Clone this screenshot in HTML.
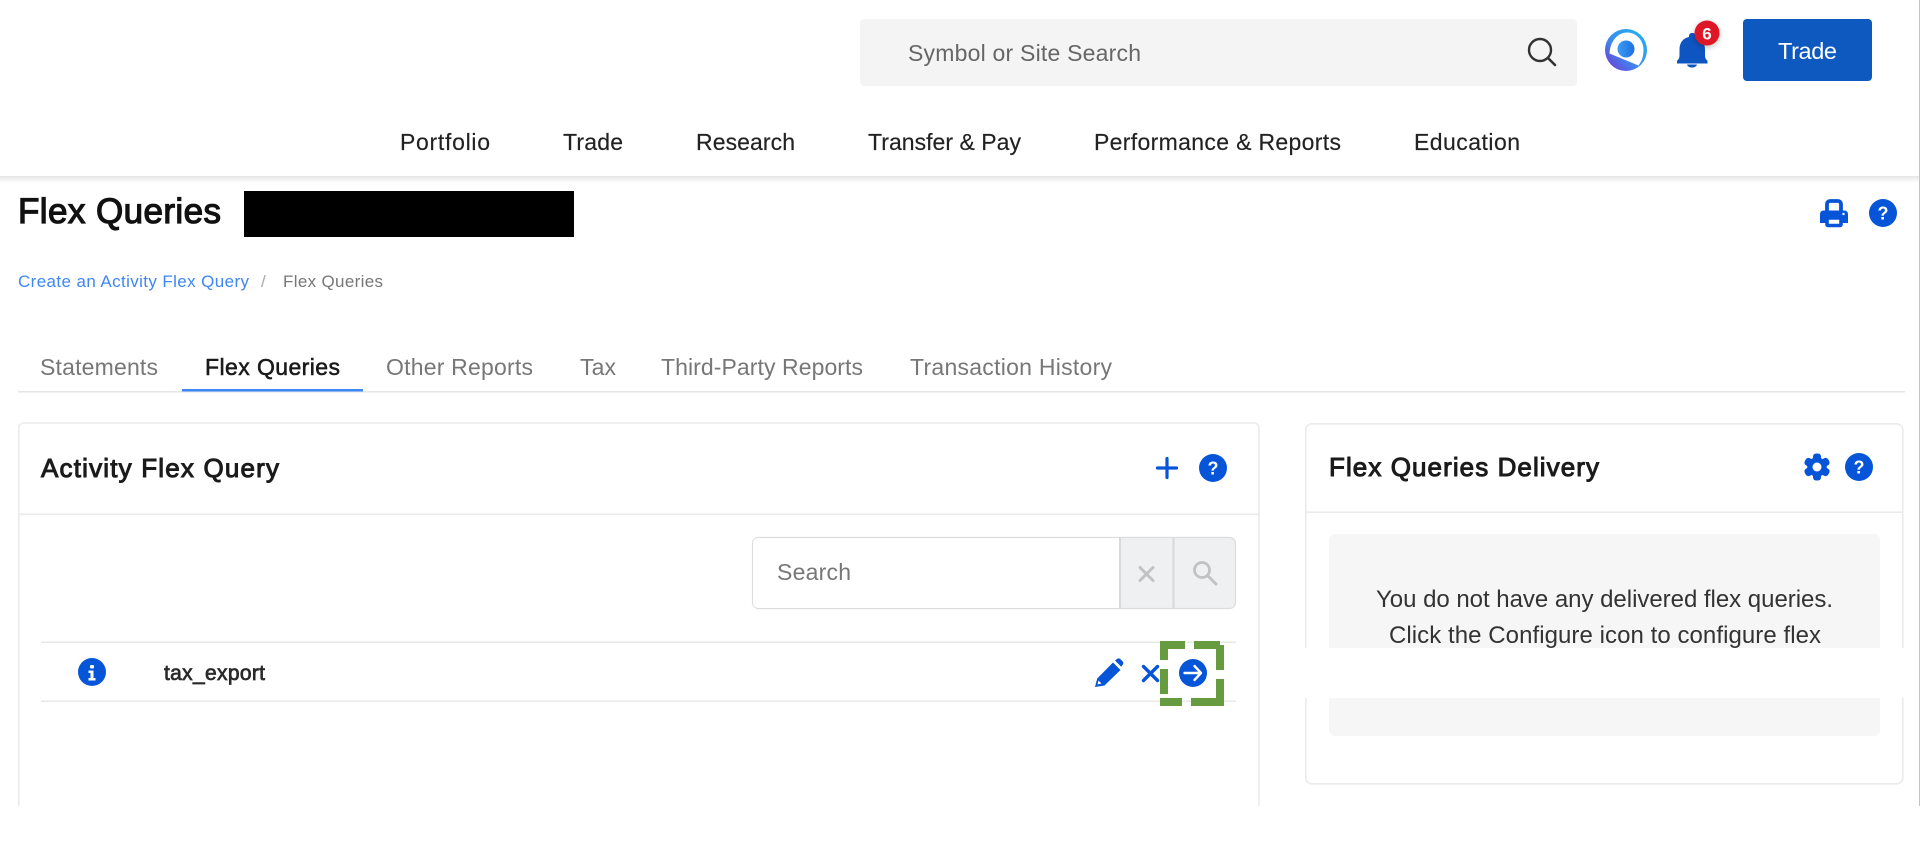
<!DOCTYPE html>
<html lang="en">
<head>
<meta charset="utf-8">
<title>Flex Queries</title>
<style>
html,body{margin:0;padding:0;background:#fff;width:1920px;height:859px;overflow:hidden}
svg{display:block;font-family:"Liberation Sans",sans-serif;filter:blur(.35px)}
.nav{font-size:23px;fill:#222;stroke:#222;stroke-width:.15px}
.tab{font-size:23px;fill:#777}
.ttl{font-size:26px;fill:#1b1b1b;stroke:#1b1b1b;stroke-width:1px}
.q{font-size:18px;font-weight:bold;fill:#fff;text-anchor:middle}
</style>
</head>
<body>
<svg width="1920" height="859" viewBox="0 0 1920 859" xmlns="http://www.w3.org/2000/svg">
<defs>
<linearGradient id="sh" x1="0" y1="0" x2="0" y2="1"><stop offset="0" stop-color="#000" stop-opacity=".1"/><stop offset="1" stop-color="#000" stop-opacity="0"/></linearGradient>
<linearGradient id="lg" x1="0" y1="1" x2="1" y2="0"><stop offset="0" stop-color="#7b2fd0"/><stop offset=".45" stop-color="#3a8df0"/><stop offset="1" stop-color="#1fb5ee"/></linearGradient>
<linearGradient id="ld" x1="0" y1="0" x2="1" y2="0"><stop offset="0" stop-color="#3f9cf5"/><stop offset="1" stop-color="#1a6fe0"/></linearGradient>
<filter id="bs" x="-40%" y="-40%" width="180%" height="180%"><feDropShadow dx="0" dy="2" stdDeviation="3" flood-color="#000" flood-opacity=".25"/></filter>
</defs>

<!-- header -->
<rect x="0" y="176" width="1920" height="7" fill="url(#sh)"/>
<rect x="860" y="19" width="717" height="67" rx="4" fill="#f4f4f4"/>
<text x="908" y="61" font-size="23" fill="#666" textLength="233">Symbol or Site Search</text>
<circle cx="1540" cy="50" r="11" fill="none" stroke="#333" stroke-width="2.400"/>
<path d="M1548 58l7 7" stroke="#333" stroke-width="2.600" stroke-linecap="round"/>

<!-- logo -->
<circle cx="1626" cy="50" r="21" fill="url(#lg)"/>
<path d="M1609.500 53.500 C1610 41 1618 32.500 1627 32.500 C1637 32.500 1643.500 41 1643.500 50 C1643.500 56 1642 61 1638.500 65.500 Z" fill="#fff"/>
<circle cx="1626" cy="49" r="8.500" fill="url(#ld)"/>

<!-- bell -->
<path d="M1692 33c-2 0-3 1.200-3 3v1c-6.500 1.300-9.500 6.300-9.500 12.500v5.500c0 3.200-1 4.500-2.500 5.800v2.700h30.500v-2.700c-1.500-1.300-2.500-2.600-2.500-5.800v-5.500c0-6.200-3-11.200-9.500-12.500v-1c0-1.800-1-3-3-3z" fill="#0e55c2"/>
<path d="M1687 64.500h10c-.6 2-2.500 3-5 3s-4.400-1-5-3z" fill="#0e55c2"/>
<circle cx="1707" cy="33" r="12.500" fill="#df1325" filter="url(#bs)"/>
<text x="1707" y="39.500" font-size="17" font-weight="bold" fill="#fff" text-anchor="middle">6</text>

<!-- trade -->
<rect x="1743" y="19" width="129" height="62" rx="4" fill="#0d59c0"/>
<text x="1778" y="59" font-size="23.500" fill="#fff" textLength="59">Trade</text>

<!-- nav -->
<text class="nav" x="400" y="150" textLength="90">Portfolio</text>
<text class="nav" x="563" y="150" textLength="60">Trade</text>
<text class="nav" x="696" y="150" textLength="99">Research</text>
<text class="nav" x="868" y="150" textLength="153">Transfer &amp; Pay</text>
<text class="nav" x="1094" y="150" textLength="247">Performance &amp; Reports</text>
<text class="nav" x="1414" y="150" textLength="106">Education</text>

<!-- title -->
<text x="18" y="223" font-size="35" fill="#111" stroke="#111" stroke-width="1.200" textLength="203">Flex Queries</text>
<rect x="244" y="191" width="330" height="46" fill="#000"/>

<!-- printer -->
<path d="M1827 211v-7a3 3 0 0 1 3-3h8a3 3 0 0 1 3 3v7" fill="none" stroke="#0655d8" stroke-width="3.800"/>
<path d="M1823.500 210.500h21a3.500 3.500 0 0 1 3.500 3.500v9h-28v-9a3.500 3.500 0 0 1 3.500-3.500z" fill="#0655d8"/>
<rect x="1827" y="218" width="14" height="7.500" rx="1" fill="#fff" stroke="#0655d8" stroke-width="3.600"/>
<circle cx="1843.500" cy="214" r="1.200" fill="#fff"/>
<circle cx="1883" cy="213" r="14" fill="#0655d8"/>
<text class="q" x="1883" y="219.500">?</text>

<!-- breadcrumb -->
<text x="18" y="287" font-size="17" fill="#3d87f5" textLength="231">Create an Activity Flex Query</text>
<text x="261" y="287" font-size="17" fill="#aaa">/</text>
<text x="283" y="287" font-size="17" fill="#777" textLength="100">Flex Queries</text>

<!-- tabs -->
<text class="tab" x="40" y="375" textLength="118">Statements</text>
<text class="tab" x="205" y="375" textLength="135" style="fill:#1a1a1a;stroke:#1a1a1a;stroke-width:.55px">Flex Queries</text>
<text class="tab" x="386" y="375" textLength="147">Other Reports</text>
<text class="tab" x="580" y="375" textLength="36">Tax</text>
<text class="tab" x="661" y="375" textLength="202">Third-Party Reports</text>
<text class="tab" x="910" y="375" textLength="202">Transaction History</text>
<rect x="18" y="391" width="1887" height="1.500" fill="#e4e6ea"/>
<rect x="182" y="389" width="181" height="2.500" fill="#3d87f5"/>

<!-- left panel -->
<path d="M18.800 806V428a5 5 0 0 1 5-5H1254a5 5 0 0 1 5 5V806" fill="none" stroke="#ebebeb" stroke-width="1.600"/>
<rect x="19" y="513.500" width="1240" height="1.400" fill="#e8e8e8"/>
<text class="ttl" x="41" y="477" textLength="238">Activity Flex Query</text>
<path d="M1167 458.500v19M1157.500 468h19" stroke="#0655d8" stroke-width="3.200" stroke-linecap="round"/>
<circle cx="1213" cy="468" r="14" fill="#0655d8"/>
<text class="q" x="1213" y="474.500">?</text>

<!-- search -->
<rect x="752.500" y="537.500" width="483" height="71" rx="6" fill="#eff0f2" stroke="#dcdcdc" stroke-width="1.200"/>
<path d="M758 538H1119V608H758a5 5 0 0 1-5-5V543a5 5 0 0 1 5-5z" fill="#fff"/>
<rect x="1119" y="538" width="2" height="70" fill="#d9d9d9"/>
<rect x="1172.500" y="538" width="2" height="70" fill="#d9d9d9"/>
<text x="777" y="580" font-size="23" fill="#777" textLength="74">Search</text>
<path d="M1140 567.500l13 13M1153 567.500l-13 13" stroke="#c2c2c2" stroke-width="3" stroke-linecap="round"/>
<circle cx="1202" cy="570" r="7.500" fill="none" stroke="#c2c2c2" stroke-width="2.800"/>
<path d="M1208 576l8 8" stroke="#c2c2c2" stroke-width="3" stroke-linecap="round"/>

<!-- row -->
<rect x="41" y="641.500" width="1195" height="1.500" fill="#e8e8e8"/>
<rect x="41" y="700.500" width="1195" height="1.500" fill="#e8e8e8"/>
<circle cx="92" cy="672" r="14" fill="#0655d8"/>
<rect x="90" y="665" width="4" height="3.500" rx="1" fill="#fff"/>
<path d="M88.500 670.500h5v7.500h2v2.500h-7v-2.500h2v-5h-2z" fill="#fff"/>
<text x="164" y="680" font-size="21" fill="#2a2a2a" stroke="#2a2a2a" stroke-width=".7" textLength="101">tax_export</text>

<!-- pencil -->
<path d="M1095 687l2.200-8.500L1113 662.500l7.500 7.500-16 15.500z" fill="#0655d8"/>
<path d="M1115 660.500l2-1.500c1.200-.8 2.500-.8 3.500.2l2 2c1 1 1 2.300.2 3.500l-1.500 2z" fill="#0655d8"/>
<path d="M1097.500 684.500l1-4 3 3z" fill="#fff"/>

<!-- x -->
<path d="M1143.500 666.500l14 14M1157.500 666.500l-14 14" stroke="#0655d8" stroke-width="3.400" stroke-linecap="round"/>

<!-- arrow -->
<circle cx="1193" cy="673" r="14" fill="#0655d8"/>
<path d="M1184.500 673h16M1194.500 666l6.500 7-6.500 7" fill="none" stroke="#fff" stroke-width="2.400" stroke-linecap="round" stroke-linejoin="round"/>

<!-- green highlight -->
<g fill="#669b3f">
<rect x="1160" y="641" width="25" height="8"/>
<rect x="1160" y="641" width="8" height="19"/>
<rect x="1160" y="669" width="8" height="25"/>
<rect x="1160" y="698" width="22" height="8"/>
<rect x="1194" y="641" width="26" height="8"/>
<rect x="1216" y="645" width="8" height="25"/>
<rect x="1216" y="679" width="8" height="27"/>
<rect x="1191" y="698" width="32" height="8"/>
</g>

<!-- right panel -->
<rect x="1305.800" y="423.800" width="597" height="360" rx="6" fill="#fff" stroke="#ebebeb" stroke-width="1.600"/>
<rect x="1306" y="511.500" width="597" height="1.400" fill="#e8e8e8"/>
<text class="ttl" x="1329" y="476" textLength="270">Flex Queries Delivery</text>
<g fill="#0655d8">
<g transform="translate(1817 467)">
<circle r="9.800"/>
<rect x="-4" y="-13.500" width="8" height="27" rx="3"/>
<rect x="-4" y="-13.500" width="8" height="27" rx="3" transform="rotate(60)"/>
<rect x="-4" y="-13.500" width="8" height="27" rx="3" transform="rotate(120)"/>
<circle r="4.500" fill="#fff"/>
</g>
<circle cx="1859" cy="467" r="14"/>
</g>
<text class="q" x="1859" y="473.500">?</text>
<rect x="1329" y="534" width="551" height="202" rx="6" fill="#f6f6f6"/>
<text x="1376" y="607" font-size="24" fill="#333" textLength="457">You do not have any delivered flex queries.</text>
<text x="1389" y="643" font-size="24" fill="#333" textLength="432">Click the Configure icon to configure flex</text>

<!-- white overlay strip -->
<rect x="1261" y="648" width="656" height="50" fill="#fff"/>

<!-- right page edge -->
<rect x="1919" y="0" width="1" height="806" fill="#c4c4c4"/>
</svg>
</body>
</html>
